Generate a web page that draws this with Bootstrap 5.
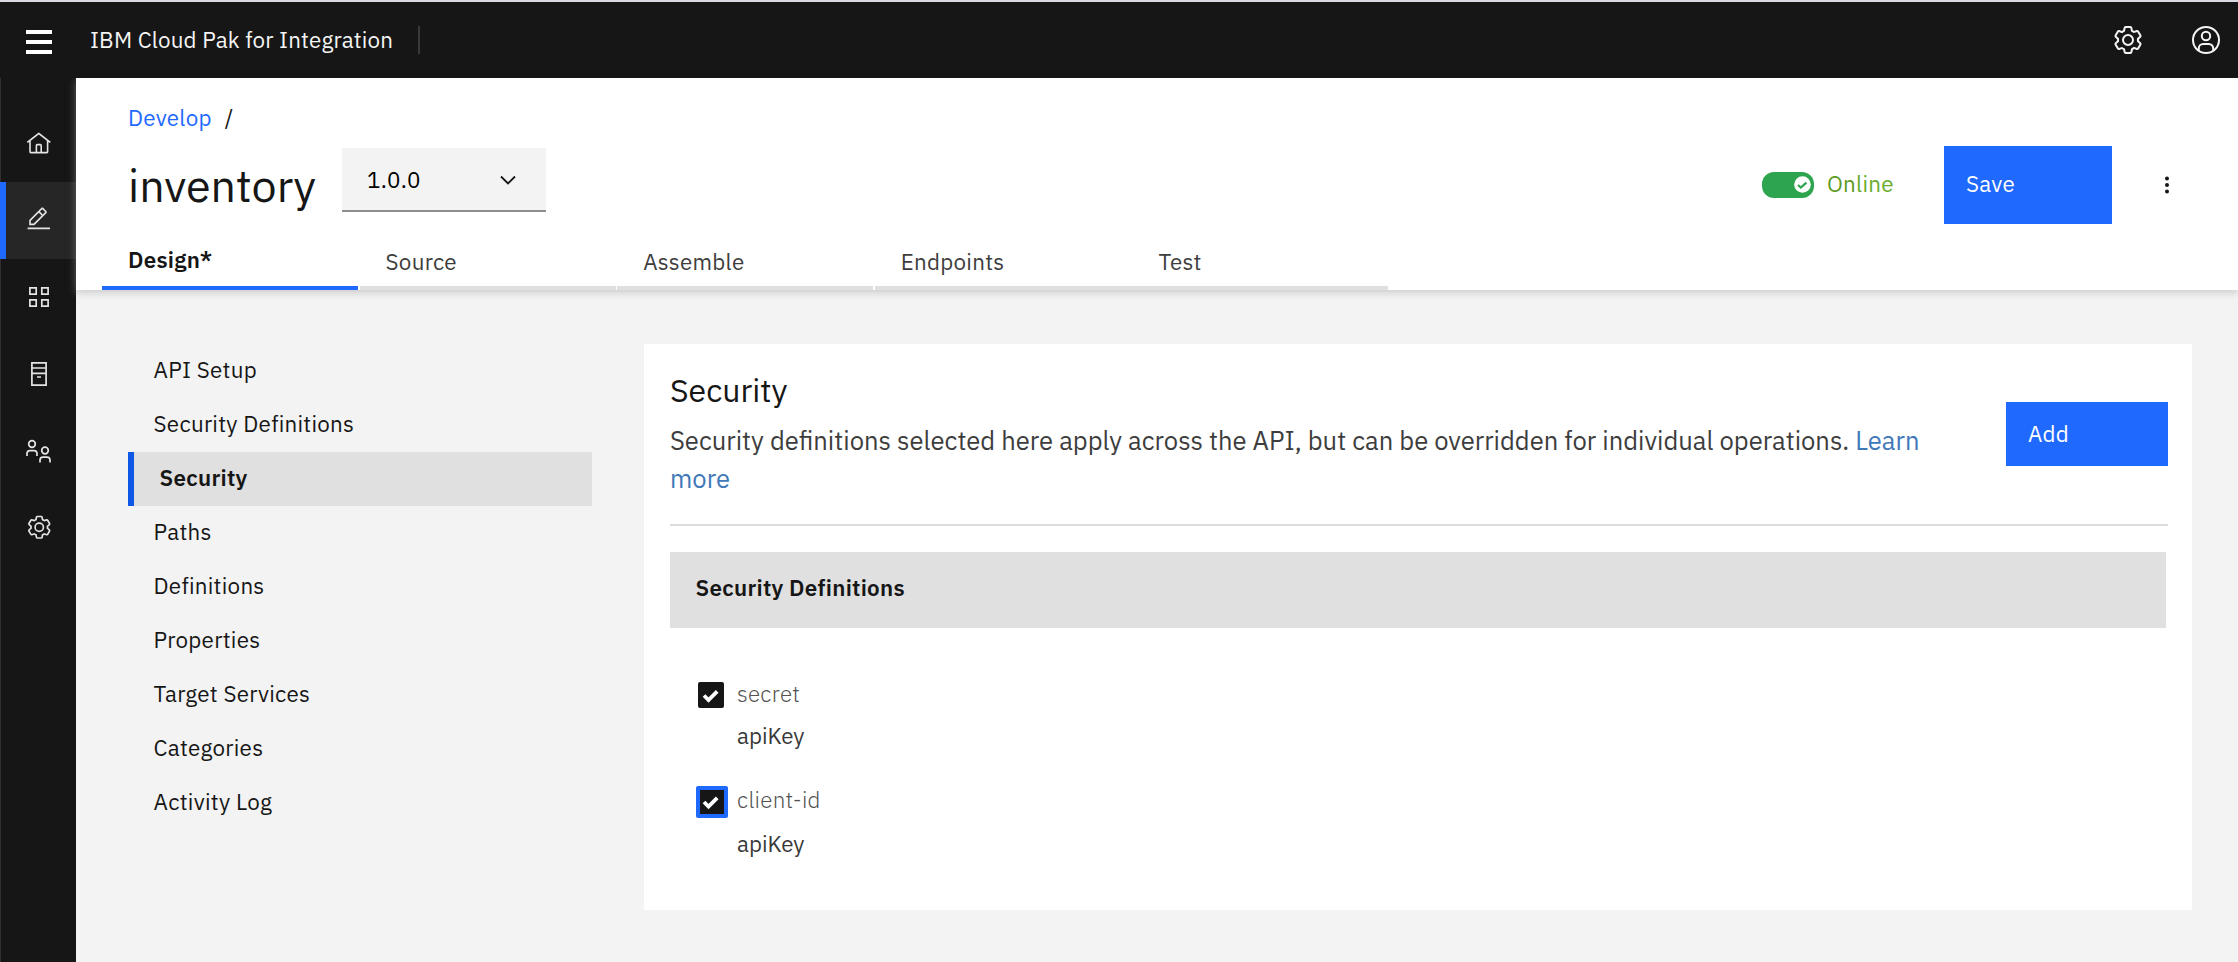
<!DOCTYPE html>
<html lang="en">
<head>
<meta charset="utf-8">
<title>IBM Cloud Pak for Integration</title>
<link href="https://cdn.jsdelivr.net/npm/bootstrap@5.3.0/dist/css/bootstrap.min.css" rel="stylesheet">
<script src="https://cdn.jsdelivr.net/npm/bootstrap@5.3.0/dist/js/bootstrap.bundle.min.js"></script>
<style>
body{font-family:"IBM Plex Sans",Roboto,"Liberation Sans",sans-serif;font-size:22.4px;line-height:28px;color:#161616;background:#f3f3f3;letter-spacing:.256px;height:962px;overflow:hidden}
svg{display:block;flex:none}
.topbar{height:78px;background:#161616;border-top:2px solid #d9d9e2;color:#f4f4f4;padding:0 16px 0 26px;z-index:2}
.topbar .navbar-brand{font-size:22.4px;color:#f4f4f4;margin:0 0 0 38px;padding:0;letter-spacing:.16px}
.burger{margin-top:4px}
.brand-rule{width:2px;height:28px;background:#393939;margin-left:auto}
.brand-box{width:394px}
.rail{width:76px;background:#161616;border-left:1px solid #2f2f2f;padding-top:27px}
.rail a{height:76.8px;color:#e4e4e4;margin-left:-1px;padding-left:2px}
.rail a.active{background:#262626;box-shadow:inset 6px 0 #1f69ff;padding-bottom:3px}
.page-head{height:212px;box-shadow:0 2px 8px rgba(160,160,160,.55);z-index:1}
.crumbs{padding:25px 0 1px 52px;line-height:30px}
.crumbs a{color:#1f69ff}
.crumbs span{margin-left:13px}
.title-row{height:78px;margin-top:12px;padding:0 68px 0 52px}
.title-row h1{font-size:44.8px;line-height:56px;letter-spacing:0;font-weight:400;width:214px}
.version{width:204px;height:64px;background:#f3f3f3;border:0;border-bottom:2px solid #8d8d8d;border-radius:0;padding:2px 30px 0 25px;margin-top:2px;letter-spacing:.256px}
.toggle-pill{width:52px;height:26px;border-radius:12px;background:#2da44e;padding:0 3px 2px 0}
.state{color:#5e9a1f;width:117px;padding-bottom:2px}.state span{color:#69ab2c}
.state-box{gap:13px}
.btn-flat,.btn-flat:hover{background:#1f69ff;color:#fff;border:0;border-radius:0;font-size:22.4px;text-align:left;padding:0 22px 2px;letter-spacing:.256px}
.btn-save{width:168px;height:78px}
.btn-flat.btn-add{width:162px;height:64px;margin-top:58px;padding-bottom:0}
.dots{margin-left:52px}
.tabs{padding-left:26px;gap:1.6px;margin-top:auto}
.tabs .nav-link{width:256px;height:50px;padding:6px 0 0 26px;border-bottom:4px solid #dfdfdf;color:#3d3d3d;line-height:31px}
.tabs .nav-link.active{border-color:#1f69ff;color:#161616;font-weight:600;line-height:27px}
.tabs .nav-link.joined{width:257.6px;margin-right:-1.6px}
.side{width:464px;margin:54px 0 0 52px}
.side a{height:54px;padding:0 0 2px 25.6px;color:#161616;text-decoration:none}
.side a.active{background:#e0e0e0;font-weight:600;border-left:6px solid #0f57e6}
.panel{margin:54px 46px 0 52px;height:566px;padding:0 24px 0 26px}
.panel h2{font-size:32px;line-height:40px;margin:26px 0 12px;letter-spacing:0}
.panel p{font-size:25.6px;line-height:38px;color:#3d3d3d;width:1270px;margin:0;letter-spacing:0}
.panel p a{color:#4178b8}
.panel-top{height:182px;border-bottom:2px solid #dcdcdc}
.band{height:76px;margin:26px 2px 0 0;background:#e0e0e0;padding:0 25.6px 4px;font-weight:600}
.defs{padding:50px 28px 0}
.def-item{height:104px;color:#393939}
.def-text{margin-left:13px}
.def-name{font-weight:300;color:#525252;line-height:31px;margin-bottom:12.5px}
.def-kind{letter-spacing:0}
.on-focus + .def-text .def-name{line-height:35px}
.check{width:26px;height:26px;border-radius:2px;background:#161616;margin-top:4px}
.check.on-focus{width:32px;height:32px;border:4px solid #1f69ff;margin:4px -4px 0 -2px;border-radius:2px}
</style>
</head>
<body class="d-flex flex-column">
<header class="navbar topbar position-relative flex-nowrap justify-content-start flex-shrink-0">
  <div class="brand-box d-flex align-items-center">
    <svg class="burger" width="26" height="24" fill="#fff"><path d="M0 0h26v4H0zM0 10h26v4H0zM0 20h26v4H0z"/></svg>
    <a class="navbar-brand" href="#">IBM Cloud Pak for Integration</a>
    <span class="brand-rule"></span>
  </div>
  <div class="d-flex ms-auto" style="gap:46px">
    <svg width="32" height="32" viewBox="0 0 32 32" fill="currentColor"><path id="gear" d="M27,16.76c0-.25,0-.5,0-.76s0-.51,0-.77l1.92-1.68A2,2,0,0,0,29.3,11L26.94,7a2,2,0,0,0-1.73-1,2,2,0,0,0-.64.1l-2.43.82a11.35,11.35,0,0,0-1.31-.75l-.51-2.52a2,2,0,0,0-2-1.61H13.64a2,2,0,0,0-2,1.61l-.51,2.52a11.48,11.48,0,0,0-1.32.75L7.43,6.06A2,2,0,0,0,6.79,6,2,2,0,0,0,5.06,7L2.7,11a2,2,0,0,0,.41,2.51L5,15.24c0,.25,0,.5,0,.76s0,.51,0,.77L3.11,18.45A2,2,0,0,0,2.7,21L5.06,25a2,2,0,0,0,1.73,1,2,2,0,0,0,.64-.1l2.43-.82a11.35,11.35,0,0,0,1.31.75l.51,2.52a2,2,0,0,0,2,1.61h4.72a2,2,0,0,0,2-1.61l.51-2.52a11.48,11.48,0,0,0,1.32-.75l2.42.82a2,2,0,0,0,.64.1,2,2,0,0,0,1.73-1L29.3,21a2,2,0,0,0-.41-2.51ZM25.21,24l-3.43-1.16a8.86,8.86,0,0,1-2.71,1.57L18.36,28H13.64l-.71-3.55a9.36,9.36,0,0,1-2.7-1.57L6.79,24,4.43,20l2.72-2.4a8.9,8.9,0,0,1,0-3.13L4.43,12,6.79,8l3.43,1.16a8.86,8.86,0,0,1,2.71-1.57L13.64,4h4.72l.71,3.55a9.36,9.36,0,0,1,2.7,1.57L25.21,8,27.57,12l-2.72,2.4a8.9,8.9,0,0,1,0,3.13L27.57,20ZM16,22a6,6,0,1,1,6-6A5.94,5.94,0,0,1,16,22Zm0-10a3.91,3.91,0,0,0-4,4,3.91,3.91,0,0,0,4,4,3.91,3.91,0,0,0,4-4A3.91,3.91,0,0,0,16,12Z"/></svg>
    <svg width="32" height="32" viewBox="0 0 32 32" fill="none" stroke="currentColor" stroke-width="2"><circle cx="16" cy="16" r="13"/><circle cx="16" cy="12" r="4.2"/><path d="M8.8 26.5V24.300a4.300 4.300 0 0 1 4.300-4.300h5.800a4.300 4.300 0 0 1 4.300 4.300v2.200"/></svg>
  </div>
</header>
<div class="d-flex flex-grow-1">
  <nav class="rail nav flex-column flex-shrink-0 flex-nowrap">
    <a class="d-flex align-items-center justify-content-center" href="#"><svg width="25.600" height="25.600" viewBox="0 0 32 32" fill="currentColor"><path d="M16.600 2.200a1 1 0 0 0-1.200 0L1 13.400 2.200 15 4 13.600V26a2 2 0 0 0 2 2h20a2 2 0 0 0 2-2V13.600L29.800 15 31 13.400zM18 26h-4v-8h4zM20 26v-8a2 2 0 0 0-2-2h-4a2 2 0 0 0-2 2v8H6V12.100l10-7.800 10 7.800V26z"/></svg></a>
    <a class="active d-flex align-items-center justify-content-center" href="#"><svg width="25.600" height="25.600" viewBox="0 0 32 32" fill="currentColor"><path d="M2 27h28v2H2zM25.400 9c.8-.8.8-2 0-2.800l-3.600-3.600c-.8-.8-2-.8-2.800 0l-15 15V24h6.400l15-15zm-5-5L24 7.600l-3 3L17.400 7l3-3zM6 22v-3.600l10-10 3.600 3.600-10 10H6z"/></svg></a>
    <a class="d-flex align-items-center justify-content-center" href="#"><svg width="20" height="20" viewBox="0 0 20 20" fill="none" stroke="currentColor" stroke-width="1.700"><path d="M.9.900h6.300v6.300H.9zM12.800.900h6.300v6.300h-6.300zM.9 12.800h6.300v6.300H.9zM12.800 12.800h6.300v6.300h-6.300z"/></svg></a>
    <a class="d-flex align-items-center justify-content-center" href="#"><svg width="16" height="24" viewBox="0 0 16 24" fill="none" stroke="currentColor" stroke-width="1.700"><path d="M.9.900h14.200v22.200H.9zM1 6h14M1 11.300h14M6 15h4"/></svg></a>
    <a class="d-flex align-items-center justify-content-center" href="#"><svg width="26" height="24" viewBox="0 0 26 24" fill="none" stroke="currentColor" stroke-width="1.700"><circle cx="6" cy="5" r="3.300"/><path d="M1 17v-2.300a3 3 0 0 1 3-3h4a3 3 0 0 1 3 3V17M14 23.500v-2.300a3 3 0 0 1 3-3h4a3 3 0 0 1 3 3v2.300"/><circle cx="19" cy="11.500" r="3.300"/></svg></a>
    <a class="d-flex align-items-center justify-content-center" href="#"><svg width="26.500" height="26.500" viewBox="0 0 32 32" fill="currentColor"><use href="#gear"/></svg></a>
  </nav>
  <div class="flex-grow-1 d-flex flex-column">
    <section class="page-head bg-white position-relative d-flex flex-column flex-shrink-0">
      <div class="crumbs"><a class="text-decoration-none" href="#">Develop</a><span>/</span></div>
      <div class="title-row d-flex align-items-center">
        <h1 class="m-0">inventory</h1>
        <button class="version d-flex align-items-center justify-content-between align-self-start" type="button">1.0.0<svg width="16" height="10" fill="none" stroke="#161616" stroke-width="1.800"><path d="M1 1.500l7 7 7-7"/></svg></button>
        <div class="state-box d-flex align-items-center ms-auto">
          <div class="toggle-pill d-flex align-items-center justify-content-end"><svg width="17" height="17" viewBox="0 0 17 17"><circle cx="8.500" cy="8.500" r="8.300" fill="#fff"/><path d="M4 9l2.800 2.600 5.600-5" fill="none" stroke="#2da44e" stroke-width="2.200"/></svg></div>
          <div class="state">On<span>line</span></div>
        </div>
        <button class="btn btn-flat btn-save" type="button">Save</button>
        <svg class="dots" width="6" height="18" fill="#161616"><circle cx="3" cy="2.500" r="2"/><circle cx="3" cy="9" r="2"/><circle cx="3" cy="15.500" r="2"/></svg>
      </div>
      <nav class="tabs nav flex-nowrap">
        <a class="nav-link active" href="#">Design*</a>
        <a class="nav-link" href="#">Source</a>
        <a class="nav-link" href="#">Assemble</a>
        <a class="nav-link joined" href="#">Endpoints</a>
        <a class="nav-link" href="#">Test</a>
      </nav>
    </section>
    <div class="d-flex">
      <nav class="side d-flex flex-column flex-shrink-0">
        <a class="d-flex align-items-center" href="#">API Setup</a>
        <a class="d-flex align-items-center" href="#">Security Definitions</a>
        <a class="d-flex align-items-center active" href="#">Security</a>
        <a class="d-flex align-items-center" href="#">Paths</a>
        <a class="d-flex align-items-center" href="#">Definitions</a>
        <a class="d-flex align-items-center" href="#">Properties</a>
        <a class="d-flex align-items-center" href="#">Target Services</a>
        <a class="d-flex align-items-center" href="#">Categories</a>
        <a class="d-flex align-items-center" href="#">Activity Log</a>
      </nav>
      <main class="panel bg-white flex-grow-1">
        <div class="panel-top d-flex justify-content-between align-items-start">
          <div>
            <h2 class="fw-normal">Security</h2>
            <p>Security definitions selected here apply across the API, but can be overridden for individual operations. <a class="text-decoration-none" href="#">Learn more</a></p>
          </div>
          <button class="btn btn-flat btn-add" type="button">Add</button>
        </div>
        <div class="band d-flex align-items-center">Security Definitions</div>
        <div class="defs">
          <div class="def-item d-flex">
            <span class="check d-flex align-items-center justify-content-center"><svg width="24" height="24" fill="none" stroke="#fff" stroke-width="3.800"><path d="M5 12.500l4.500 4.500 8.700-8.700"/></svg></span>
            <div class="def-text"><div class="def-name">secret</div><div class="def-kind">apiKey</div></div>
          </div>
          <div class="def-item d-flex">
            <span class="check on-focus d-flex align-items-center justify-content-center"><svg width="24" height="24" fill="none" stroke="#fff" stroke-width="3.800"><path d="M4 12l4.500 4.500 8.700-8.700"/></svg></span>
            <div class="def-text"><div class="def-name">client-id</div><div class="def-kind">apiKey</div></div>
          </div>
        </div>
      </main>
    </div>
  </div>
</div>
</body>
</html>
